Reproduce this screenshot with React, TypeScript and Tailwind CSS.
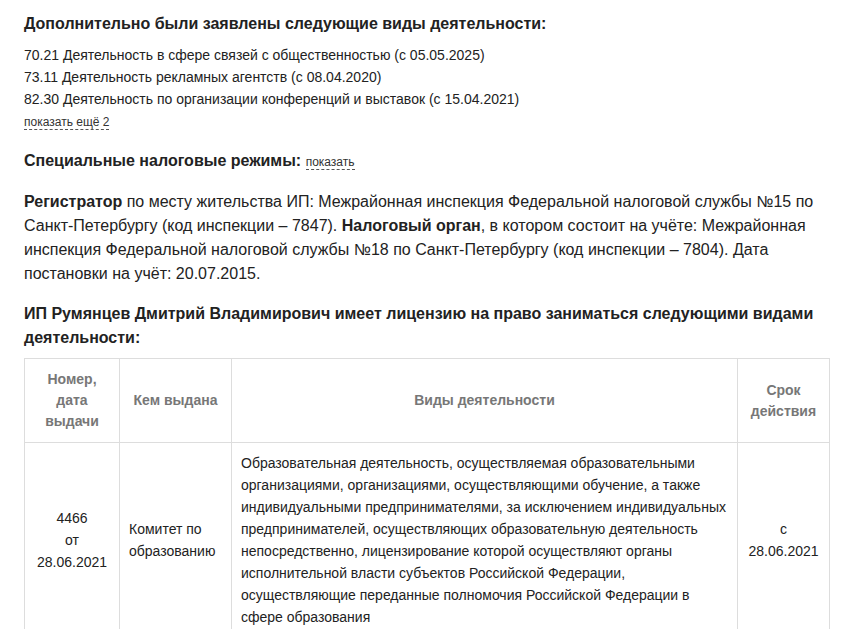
import React from "react";

const activities = [
  "70.21 Деятельность в сфере связей с общественностью (с 05.05.2025)",
  "73.11 Деятельность рекламных агентств (с 08.04.2020)",
  "82.30 Деятельность по организации конференций и выставок (с 15.04.2021)",
];

function DashedLink({ children }: { children: React.ReactNode }) {
  return (
    <span className="cursor-pointer border-b border-dashed border-[#555] text-[12px] leading-[14px] text-[#333]">
      {children}
    </span>
  );
}

export default function App() {
  return (
    <div
      className="w-[853px] bg-white pl-[24px] pr-[25px] pt-[12px] text-[#222]"
      style={{ fontFamily: '"Liberation Sans", Arial, sans-serif' }}
    >
      <h2 className="text-[16px] font-bold leading-[24px]">
        Дополнительно были заявлены следующие виды деятельности:
      </h2>
      <div className="mt-[8px] text-[14px] leading-[22px]">
        {activities.map((a) => (
          <div key={a}>{a}</div>
        ))}
        <div className="leading-[22px]">
          <DashedLink>показать ещё 2</DashedLink>
        </div>
      </div>

      <div className="mt-[17px] text-[16px] leading-[24px]">
        <span className="font-bold">Специальные налоговые режимы:</span>{" "}
        <DashedLink>показать</DashedLink>
      </div>

      <p className="mt-[17px] text-[16px] leading-[24px]">
        <b>Регистратор</b> по месту жительства ИП: Межрайонная инспекция Федеральной налоговой службы №15 по
        Санкт-Петербургу (код инспекции – 7847). <b>Налоговый орган</b>, в котором состоит на учёте: Межрайонная
        инспекция Федеральной налоговой службы №18 по Санкт-Петербургу (код инспекции – 7804). Дата
        постановки на учёт: 20.07.2015.
      </p>

      <h2 className="mt-[16px] text-[16px] font-bold leading-[24px]">
        ИП Румянцев Дмитрий Владимирович имеет лицензию на право заниматься следующими видами деятельности:
      </h2>

      <table className="mt-[8px] w-[805px] table-fixed border-collapse text-[14px]">
        <colgroup>
          <col className="w-[95px]" />
          <col className="w-[112px]" />
          <col className="w-[506px]" />
          <col className="w-[92px]" />
        </colgroup>
        <thead>
          <tr className="text-[#777]">
            <th className="border border-[#ddd] px-[9px] py-[10px] text-center align-middle font-bold leading-[21px]">
              Номер,
              <br />
              дата
              <br />
              выдачи
            </th>
            <th className="border border-[#ddd] px-[9px] py-[10px] text-center align-middle font-bold leading-[21px]">
              Кем выдана
            </th>
            <th className="border border-[#ddd] px-[9px] py-[10px] text-center align-middle font-bold leading-[21px]">
              Виды деятельности
            </th>
            <th className="border border-[#ddd] px-[9px] py-[10px] text-center align-middle font-bold leading-[21px]">
              Срок
              <br />
              действия
            </th>
          </tr>
        </thead>
        <tbody>
          <tr className="leading-[22px]">
            <td className="border border-[#ddd] px-[9px] py-[9px] text-center align-middle">
              4466
              <br />
              от
              <br />
              28.06.2021
            </td>
            <td className="border border-[#ddd] px-[9px] py-[9px] text-left align-middle">
              Комитет по образованию
            </td>
            <td className="border border-[#ddd] px-[9px] py-[9px] text-left align-middle">
              Образовательная деятельность, осуществляемая образовательными организациями, организациями,
              осуществляющими обучение, а также индивидуальными предпринимателями, за исключением индивидуальных
              предпринимателей, осуществляющих образовательную деятельность непосредственно, лицензирование
              которой осуществляют органы исполнительной власти субъектов Российской Федерации, осуществляющие
              переданные полномочия Российской Федерации в сфере образования
            </td>
            <td className="border border-[#ddd] px-[9px] py-[9px] text-center align-middle">
              с
              <br />
              28.06.2021
            </td>
          </tr>
        </tbody>
      </table>
    </div>
  );
}
